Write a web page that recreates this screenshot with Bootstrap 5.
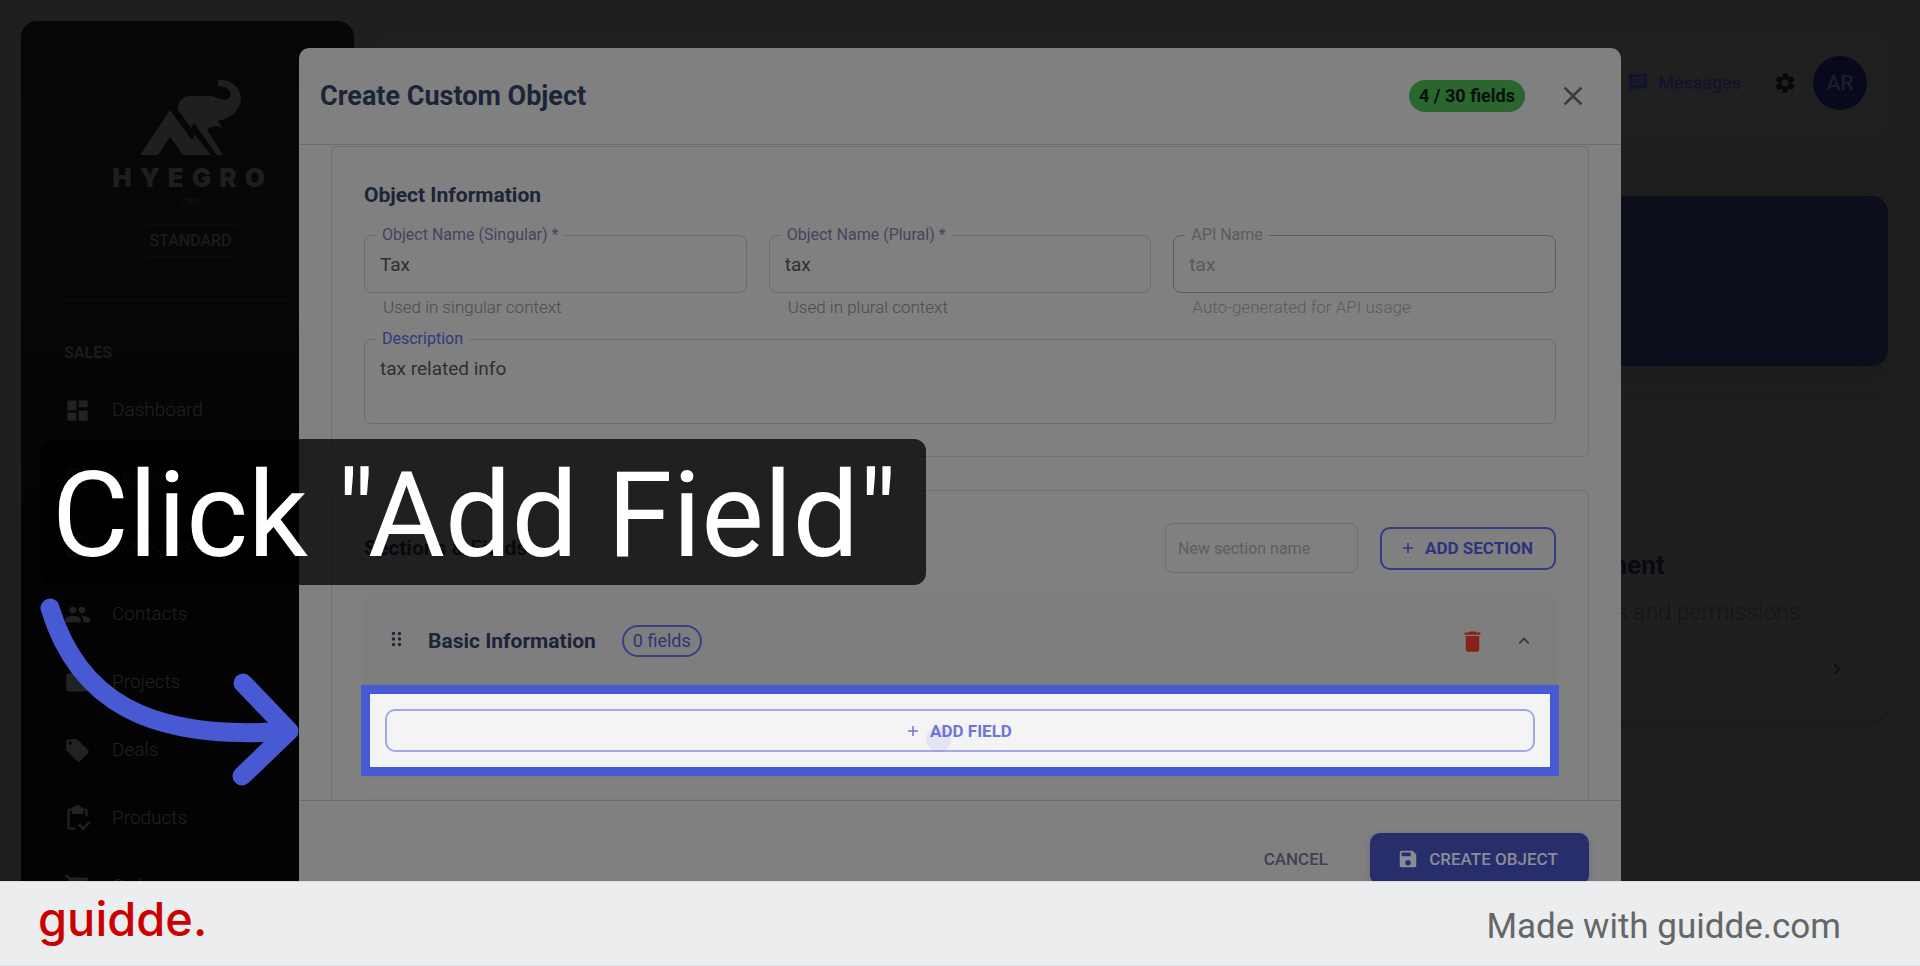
<!DOCTYPE html>
<html lang="en">
<head>
<meta charset="utf-8">
<meta name="viewport" content="width=device-width, initial-scale=1">
<title>Click "Add Field"</title>
<link href="https://cdn.jsdelivr.net/npm/bootstrap@5.3.0/dist/css/bootstrap.min.css" rel="stylesheet">
<style>
  body { font-family: Roboto, "Liberation Sans", sans-serif; background: #1e1f1e; font-size: 18px; line-height: 24px; }
  svg { display: block; flex: none; }
  .stage { min-height: 0; }

  /* dimmed application behind the dialog */
  .app { padding: 21px 32px 0 21px; gap: 21px; }
  .sidebar { width: 333px; border-radius: 16px 16px 0 0; background: linear-gradient(#060606, #060707 30%, #030303 60%); color: #1e1e1e; padding: 59px 37px 0 43px; }
  .wordmark { font-family: Inter, "Liberation Sans", sans-serif; font-weight: 900; font-size: 26px; line-height: 28px; letter-spacing: 8px; color: #1e1e1e; }
  .crm { font-size: 9px; line-height: 12px; color: #141414; }
  .plan { font-size: 16px; font-weight: 500; line-height: 31px; width: 122px; margin-top: 16px; border: 1px solid #0d0d0d; color: #1b1b1b; }
  .sidebar hr { margin: 43px 30px 40px 0; border-color: #0f0f0f; opacity: 1; }
  .group-title { font-size: 16px; font-weight: 700; line-height: 24px; color: #1b1b1b; }
  .side-nav { margin-top: 11px; }
  .side-link { height: 68px; font-size: 19px; font-weight: 300; color: #222; text-decoration: none; gap: 21px; }
  .topbar { margin-top: 12px; height: 100px; border-radius: 16px; background: #202020; padding: 0 21px; color: #11122e; }
  .topbar .nav-item-link { color: #11122e; font-size: 18px; font-weight: 500; text-decoration: none; gap: 9px; }
  .avatar { width: 54px; height: 54px; background: #09091d; color: #1e1e2a; font-size: 21px; font-weight: 500; border: 0; }
  .banner { margin-top: 63px; height: 170px; border-radius: 16px; background: linear-gradient(90deg, #0c0e19, #0d0e1b); box-shadow: 0 8px 24px #1b1b1b; }
  .tile { border-radius: 16px; background: #1f1f1f; box-shadow: 0 4px 10px #1a1a1a; height: 320px; padding: 0 39px 0 45px; }
  .tiles { margin-top: 34px; gap: 67px; }
  .tile-row { gap: 32px; }
  .tile h3 { font-size: 26px; line-height: 32px; font-weight: 700; color: #070a10; margin: 149px 0 18px; }
  .tile p { font-size: 23px; line-height: 28px; font-weight: 300; color: #151515; margin: 0 0 30px; }

  /* dialog */
  .overlay { padding-top: 48px; }
  .dialog { width: 100%; max-width: 1322px; background: #808080; border-radius: 10px; color: #2a2d30; }
  .dialog-head { height: 97px; padding: 0 24px 0 21px; border-bottom: 1px solid #6c6c6c; }
  .dialog-head h1 { font-size: 27px; line-height: 32px; font-weight: 700; color: #1b2438; }
  .count { background: #2b662e; color: #0a0f0a; font-size: 18px; font-weight: 700; line-height: 32px; padding: 0 10px; margin-right: 24px; }
  .icon-btn { background: none; border: 0; padding: 8px; color: #3c3c3c; }
  .dialog-body { max-height: 67.8vh; padding: 1px 32px 0; }
  .panel { border: 1px solid #727272; border-radius: 6px; padding: 32px; }
  .panel + .panel { margin-top: 33px; }
  .panel h2 { font-size: 21px; line-height: 32px; font-weight: 700; color: #1b2438; }
  .fields { gap: 22px; }
  .field label { left: 12px; top: -12px; padding: 0 6px; background: #808080; font-size: 16px; line-height: 24px; color: #44455e; }
  .field label.focused { color: #33377a; }
  .field .form-control { height: 58px; padding: 0 15px; font-size: 19px; color: #2c3035; background: transparent; border: 1px solid #6c6c6c; border-radius: 8px; }
  .field textarea.form-control { height: 85px; padding-top: 16px; resize: none; line-height: 26px; }
  .field .form-control:disabled { color: #5a5a5a; border: 1px solid #5c5c5c; }
  .field.full { margin-top: 21px; }
  .hint { font-size: 17px; line-height: 22px; margin: 3px 0 0 19px; color: #4c4c4c; font-weight: 300; }
  .muted, .field .muted { color: #5c5c5c; }
  .new-section { width: 193px; height: 50px; font-size: 16px; background: transparent; border: 1px solid #6e6e6e; border-radius: 8px; }
  .new-section::placeholder { color: #5c5f5c; }
  .outline-btn { height: 43px; border: 2px solid #343a85; border-radius: 10px; background: transparent; color: #2d337c; font-size: 17px; font-weight: 700; line-height: 20px; gap: 12px; }
  .add-section { width: 176px; }
  .section-box { margin: 21px -1px 0; border-radius: 6px; background: #7e7e7e; padding-bottom: 13px; }
  .section-box + .section-box { margin-top: 16px; }
  .section-head { height: 94px; padding: 0 14px 0 28px; margin-bottom: 6px; }
  .section-head h3 { font-size: 21px; line-height: 32px; font-weight: 700; color: #1b2438; margin: 0 26px 0 26px; }
  .trash { margin-right: 11px; }
  .chip { border: 2px solid #3b3f82; color: #2f3478; font-size: 18px; line-height: 28px; padding: 0 9px; }
  .spot { margin: 0 7px; padding: 15px; background: #f4f4f5; outline: 9px solid #4759d3; }
  .spot .outline-btn { border-color: #a3a8e6; color: #7076d6; width: 100%; }
  .click-dot { width: 25px; height: 25px; background: #5a60d8; opacity: .1; left: calc(50% - 34px); bottom: 15px; }
  .dialog-foot { border-top: 1px solid #6c6c6c; padding: 32px; gap: 12px; }
  .text-btn { background: none; border: 0; color: #3f4152; font-size: 17px; font-weight: 500; padding: 0 30px; }
  .save-btn { width: 219px; height: 52px; border: 0; border-radius: 10px; background: #272e6b; color: #8b8c98; font-size: 17px; font-weight: 500; gap: 10px; padding: 0 8px 0 4px; box-shadow: 0 2px 6px #6a6a7a; }

  /* tutorial overlay */
  .caption { left: 40px; top: 439px; width: 886px; padding: 4px 12px 0; height: 146px; border-radius: 12px; background: rgba(0,0,0,.75); color: #fff; font-size: 118px; line-height: 146px; font-weight: 400; white-space: nowrap; }
  .arrow { left: 30px; top: 590px; }
  .brand-bar { height: 85px; background: #ecedef; border-top: 1px solid #dcdde0; border-bottom: 1px solid #dcdfe1; padding: 6px 79px 0 38px; }
  .brand { font-family: Inter, sans-serif; font-size: 47px; line-height: 60px; font-weight: 500; color: #cb0000; text-decoration: none; padding-bottom: 16px; }
  .made { font-size: 35px; line-height: 44px; color: #646668; }
</style>
</head>
<body class="vh-100 d-flex flex-column overflow-hidden">
<main class="stage position-relative flex-grow-1 overflow-hidden">

  <div class="app d-flex h-100">
    <aside class="sidebar flex-shrink-0 h-100 overflow-hidden">
      <svg class="mx-auto" width="102" height="76" viewBox="0 0 102 76" fill="#1f1f1f">
        <path d="M0 75 30 30 52 60 55 55 71 75H43L30 57 18 75Z"/>
        <path d="M78 0C91-1 100 7 101 18 101 28 93 38 78 41L82 48C77 45 70 46 67 50L83 75H77L54 43 51 48 38 30C37 22 43 16 50 16H72C79 19 86 22 90 17 92 12 89 6 78 6Z"/>
      </svg>
      <div class="wordmark text-center mt-2 ps-1 text-nowrap">HYEGRO</div>
      <div class="crm text-center mt-1">CRM</div>
      <div class="plan rounded-pill text-center mx-auto">STANDARD</div>
      <hr>
      <div class="group-title">SALES</div>
      <nav class="side-nav">
        <a class="side-link d-flex align-items-center" href="#"><svg width="27" height="27" viewBox="0 0 24 24" fill="currentColor"><path d="M3 12h8V3H3Zm0 9h8v-7H3Zm10 0h8v-9h-8Zm0-18v6h8V3Z"/></svg>Dashboard</a>
        <a class="side-link d-flex align-items-center" href="#"><svg width="27" height="27" viewBox="0 0 24 24" fill="none" stroke="currentColor" stroke-width="2"><rect x="4" y="4" width="16" height="16"/></svg>Leads</a>
        <a class="side-link d-flex align-items-center" href="#"><svg width="27" height="27" viewBox="0 0 24 24" fill="none" stroke="currentColor" stroke-width="2"><rect x="4" y="4" width="16" height="16"/></svg>Accounts</a>
        <a class="side-link d-flex align-items-center" href="#"><svg width="27" height="27" viewBox="0 0 24 24" fill="currentColor"><path d="M16 11a3 3 0 1 0 0-6 3 3 0 0 0 0 6Zm-8 0a3 3 0 1 0 0-6 3 3 0 0 0 0 6Zm0 2c-2.300 0-7 1.200-7 3.500V19h14v-2.500C15 14.200 10.300 13 8 13Zm8 0h-1c1.200.8 2 2 2 3.500V19h6v-2.500c0-2.300-4.700-3.500-7-3.500Z"/></svg>Contacts</a>
        <a class="side-link d-flex align-items-center" href="#"><svg width="27" height="27" viewBox="0 0 24 24" fill="currentColor"><path d="M10 4H4a2 2 0 0 0-2 2v12c0 1.100.9 2 2 2h16a2 2 0 0 0 2-2V8a2 2 0 0 0-2-2h-8Z"/></svg>Projects</a>
        <a class="side-link d-flex align-items-center" href="#"><svg width="27" height="27" viewBox="0 0 24 24" fill="currentColor"><path fill-rule="evenodd" d="m21.400 11.600-9-9A2 2 0 0 0 11 2H4a2 2 0 0 0-2 2v7c0 .5.200 1 .6 1.400l9 9a2 2 0 0 0 2.800 0l7-7a2 2 0 0 0 0-2.800ZM5.500 7a1.500 1.500 0 1 1 0-3 1.500 1.500 0 0 1 0 3Z"/></svg>Deals</a>
        <a class="side-link d-flex align-items-center" href="#"><svg width="27" height="27" viewBox="0 0 24 24" fill="none" stroke="currentColor" stroke-width="2"><path d="M10 21H5a1 1 0 0 1-1-1V5a1 1 0 0 1 1-1h14a1 1 0 0 1 1 1v5M13 17l4 4 6-6"/><path d="M8 3h8v4H8ZM10 3a2 2 0 0 1 4 0" fill="currentColor"/></svg>Products</a>
        <a class="side-link d-flex align-items-center" href="#"><svg width="27" height="27" viewBox="0 0 24 24" fill="currentColor"><path d="M1 2v2h2l3.600 7.600L5.200 14A2 2 0 0 0 7 17h12v-2H7.400l1.100-2H16a2 2 0 0 0 1.700-1L21.300 5.500A1 1 0 0 0 20.400 4H5.200L4.300 2Z"/></svg>Orders</a>
      </nav>
    </aside>

    <div class="flex-grow-1 overflow-hidden">
      <header class="topbar d-flex align-items-center justify-content-end">
        <a class="nav-item-link d-flex align-items-center" href="#"><svg width="22" height="22" viewBox="0 0 24 24" fill="currentColor"><path fill-rule="evenodd" d="M20 2H4a2 2 0 0 0-2 2v18l4-4h14a2 2 0 0 0 2-2V4a2 2 0 0 0-2-2ZM6 6h12v1.500H6Zm0 3.200h12v1.500H6Zm0 3.200h12v1.500H6Z"/></svg>Messages</a>
        <button class="icon-btn ms-4 me-1" aria-label="Settings"><svg width="24" height="24" viewBox="0 0 24 24" fill="#05090c"><path fill-rule="evenodd" d="M19.140 12.940c.04-.3.060-.61.060-.94s-.02-.64-.07-.94l2.030-1.580a.49.49 0 0 0 .12-.61l-1.920-3.320a.49.49 0 0 0-.59-.22l-2.390.96a7 7 0 0 0-1.620-.94l-.36-2.540A.48.48 0 0 0 13.920 2.400h-3.840a.48.48 0 0 0-.47.41l-.36 2.540a7 7 0 0 0-1.620.94l-2.390-.96a.49.49 0 0 0-.59.22L2.740 8.870a.48.48 0 0 0 .12.61l2.030 1.580a6 6 0 0 0-.02 1.880l-2.030 1.580a.49.49 0 0 0-.12.61l1.920 3.320c.12.220.37.290.59.220l2.390-.96c.5.380 1.030.7 1.620.94l.36 2.540c.05.240.24.410.48.410h3.840c.24 0 .44-.17.47-.41l.36-2.540a7 7 0 0 0 1.620-.94l2.390.96c.22.080.47 0 .59-.22l1.920-3.320a.48.48 0 0 0-.12-.61ZM12 15.600a3.600 3.600 0 1 1 0-7.200 3.600 3.600 0 0 1 0 7.200Z"/></svg></button>
        <button class="avatar rounded-circle p-0 ms-1">AR</button>
      </header>
      <div class="banner"></div>
      <div class="tiles d-flex flex-column">
        <div class="tile-row d-flex">
          <div class="tile w-100"></div>
          <div class="tile w-100"></div>
          <div class="tile w-100">
            <h3>User Management</h3>
            <p class="text-nowrap">Control user roles and permissions</p>
            <svg class="ms-auto" width="24" height="24" viewBox="0 0 24 24" fill="none" stroke="#0d0d26" stroke-width="2"><path d="m9 7 5 5-5 5"/></svg>
          </div>
        </div>
        <div class="tile-row d-flex">
          <div class="tile w-100"></div>
          <div class="tile w-100"></div>
          <div class="tile w-100"></div>
        </div>
      </div>
    </div>
  </div>

  <div class="overlay position-absolute top-0 start-0 w-100 d-flex justify-content-center">
    <section class="dialog" role="dialog" aria-labelledby="dialogTitle">
      <header class="dialog-head d-flex align-items-center">
        <h1 class="mb-0 me-auto" id="dialogTitle">Create Custom Object</h1>
        <span class="count rounded-pill">4 / 30 fields</span>
        <button class="icon-btn" aria-label="Close"><svg width="32" height="32" viewBox="0 0 24 24" fill="currentColor"><path d="M19 6.410 17.590 5 12 10.590 6.410 5 5 6.410 10.590 12 5 17.590 6.410 19 12 13.410 17.590 19 19 17.590 13.410 12Z"/></svg></button>
      </header>

      <div class="dialog-body overflow-hidden">
        <div class="panel">
          <h2 class="mb-4">Object Information</h2>
          <div class="fields d-flex">
            <div class="field w-100 position-relative">
              <label class="position-absolute" for="singular">Object Name (Singular) *</label>
              <input class="form-control" id="singular" value="Tax">
              <div class="hint">Used in singular context</div>
            </div>
            <div class="field w-100 position-relative">
              <label class="position-absolute" for="plural">Object Name (Plural) *</label>
              <input class="form-control" id="plural" value="tax">
              <div class="hint">Used in plural context</div>
            </div>
            <div class="field w-100 position-relative">
              <label class="position-absolute muted" for="api">API Name</label>
              <input class="form-control" id="api" value="tax" disabled>
              <div class="hint muted">Auto-generated for API usage</div>
            </div>
          </div>
          <div class="field full position-relative">
            <label class="position-absolute focused" for="desc">Description</label>
            <textarea class="form-control" id="desc">tax related info</textarea>
          </div>
        </div>

        <div class="panel">
          <div class="fields d-flex align-items-center">
            <h2 class="mb-0 me-auto">Sections &amp; Fields</h2>
            <input class="new-section form-control" placeholder="New section name" aria-label="New section name">
            <button class="outline-btn add-section d-flex align-items-center justify-content-center"><svg width="10" height="10" viewBox="0 0 10 10" stroke="currentColor" stroke-width="1.500"><path d="M5 0v10M0 5h10"/></svg>ADD SECTION</button>
          </div>
          <div class="section-box">
            <div class="section-head d-flex align-items-center">
              <svg width="11" height="16" viewBox="0 0 11 16" fill="#1b2438" class="mb-1"><circle cx="2.500" cy="2.500" r="1.700"/><circle cx="8.500" cy="2.500" r="1.700"/><circle cx="2.500" cy="8" r="1.700"/><circle cx="8.500" cy="8" r="1.700"/><circle cx="2.500" cy="13.500" r="1.700"/><circle cx="8.500" cy="13.500" r="1.700"/></svg>
              <h3>Basic Information</h3>
              <span class="chip rounded-pill me-auto">0 fields</span>
              <button class="icon-btn trash" aria-label="Delete section"><svg width="27" height="27" viewBox="0 0 24 24" fill="#86221b"><path d="M6 19c0 1.100.9 2 2 2h8a2 2 0 0 0 2-2V7H6ZM19 4h-3.500l-1-1h-5l-1 1H5v2h14Z"/></svg></button>
              <button class="icon-btn" aria-label="Collapse section"><svg width="22" height="22" viewBox="0 0 24 24" fill="currentColor"><path d="m12 8-6 6 1.410 1.410L12 10.830l4.590 4.580L18 14Z"/></svg></button>
            </div>
            <div class="spot position-relative">
              <button class="outline-btn d-flex align-items-center justify-content-center"><svg width="10" height="10" viewBox="0 0 10 10" stroke="currentColor" stroke-width="1.500"><path d="M5 0v10M0 5h10"/></svg>ADD FIELD</button>
              <span class="click-dot position-absolute rounded-circle"></span>
            </div>
          </div>
          <div class="section-box"><div class="section-head"></div></div>
        </div>
      </div>

      <footer class="dialog-foot d-flex align-items-center justify-content-end">
        <button class="text-btn">CANCEL</button>
        <button class="save-btn d-flex align-items-center justify-content-center"><svg width="22" height="22" viewBox="0 0 24 24" fill="currentColor"><path fill-rule="evenodd" d="M17 3H5a2 2 0 0 0-2 2v14c0 1.100.9 2 2 2h14a2 2 0 0 0 2-2V7Zm-5 16a3 3 0 1 1 0-6 3 3 0 0 1 0 6Zm3-10H5V5h10Z"/></svg>CREATE OBJECT</button>
      </footer>
    </section>
  </div>

  <div class="caption position-absolute">Click "Add Field"</div>
  <svg class="arrow position-absolute" width="275" height="205" viewBox="30 590 275 205" fill="none" stroke="#4759d3" stroke-width="19" stroke-linecap="round" stroke-linejoin="round"><path d="M50 608C78 700 148 742 289 731M243 683l46 48-47 45"/></svg>
</main>

<footer class="brand-bar flex-shrink-0 d-flex align-items-center justify-content-between">
  <a class="brand" href="#">guidde.</a>
  <span class="made">Made with guidde.com</span>
</footer>
<script src="https://cdn.jsdelivr.net/npm/bootstrap@5.3.0/dist/js/bootstrap.bundle.min.js"></script>
</body>
</html>
